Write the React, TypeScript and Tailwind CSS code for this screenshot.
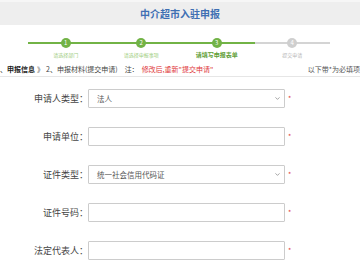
import { ChevronDown } from 'lucide-react'

const cjk = "font-['Noto_Sans_CJK_SC','Noto_Sans',sans-serif]"

export default function App() {
  const steps = [
    { no: 1, label: "请选择部门", done: true, active: false },
    { no: 2, label: "请选择申报事项", done: true, active: false },
    { no: 3, label: "请填写申报表单", done: true, active: true },
    { no: 4, label: "提交申请", done: false, active: false },
  ]

  const fields = [
    { label: "申请人类型：", value: "法人", select: true },
    { label: "申请单位：", value: "", select: false },
    { label: "证件类型：", value: "统一社会信用代码证", select: true },
    { label: "证件号码：", value: "", select: false },
    { label: "法定代表人：", value: "", select: false },
  ]

  return (
    <div className={`w-[360px] h-[270px] overflow-hidden bg-white ${cjk}`}>
      {/* Header */}
      <div className="h-[25px] bg-[#eeeeee] border-t-2 border-[#f6f6f6] flex items-center justify-center">
        <h1 className="text-[10px] font-bold text-[#3e6fb3] leading-none">中介超市入驻申报</h1>
      </div>

      {/* Steps */}
      <div className="pl-[28px] pt-[13px] h-[37px]">
        <div className="grid grid-cols-4 w-[302px]">
          {steps.map((s) => (
            <div key={s.no} className="relative flex flex-col items-center">
              <div className={`absolute left-0 right-0 top-[4px] h-[2px] ${s.done ? "bg-[#72b346]" : "bg-[#d4d4d4]"}`}></div>
              <div
                className={`relative z-10 w-[10px] h-[10px] rounded-full flex items-center justify-center text-[6px] leading-none text-white ${
                  s.done ? "bg-[#72b346]" : "bg-[#cfcfcf]"
                }`}
              >
                {s.no}
              </div>
              <span
                className={`mt-[4px] leading-none whitespace-nowrap ${
                  s.active
                    ? "text-[6px] font-bold text-[#5f9e37]"
                    : s.done
                    ? "text-[5px] text-[#9ccc7c]"
                    : "text-[5px] text-[#b5b5b5]"
                }`}
              >
                {s.label}
              </span>
            </div>
          ))}
        </div>
      </div>

      {/* Info row */}
      <div className="h-[15px] flex items-center border-b border-[#e6e6e6] text-[7px] text-[#444] whitespace-nowrap">
        <span>、</span>
        <span className="font-bold text-[#222]">申报信息</span>
        <span className="ml-[2px]">》</span>
        <span className="ml-[2px]">2、申报材料(提交申请)</span>
        <span className="ml-[7px]">注：</span>
        <span className="ml-[3px] text-[#e0373a]">修改后,重新"提交申请"</span>
        <span className="ml-auto flex-none text-[#555]">以下带*为必填项</span>
      </div>

      {/* Form */}
      <div className="pt-[12px] flex flex-col gap-[19px]">
        {fields.map((f) => (
          <div key={f.label} className="flex items-center">
            <label className="w-[88px] text-right text-[9px] text-[#444] leading-none">{f.label}</label>
            <div className="w-[197px] h-[19px] border border-[#cccccc] rounded-[1px] flex items-center pl-[8px] pr-[3px] text-[7.5px] text-[#555]">
              <span className="flex-1">{f.value}</span>
              {f.select && <ChevronDown size={7} strokeWidth={2} className="text-[#666]" />}
            </div>
            <span className="ml-[3px] text-[7px] text-[#e0373a] leading-none">*</span>
          </div>
        ))}
      </div>
    </div>
  )
}
